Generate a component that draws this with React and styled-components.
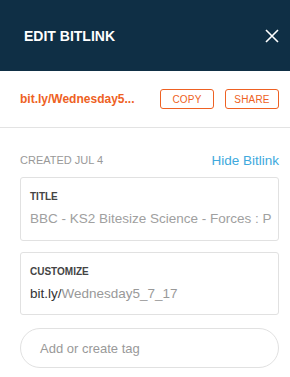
import React from "react";
import styled, { createGlobalStyle } from "styled-components";

const Global = createGlobalStyle`
  html, body { margin: 0; padding: 0; background: #fff; }
  body { font-family: "Liberation Sans", Arial, sans-serif; -webkit-font-smoothing: antialiased; }
  * { box-sizing: border-box; }
`;

const Panel = styled.div`
  width: 290px;
  height: 377px;
  background: #fff;
  display: flex;
  flex-direction: column;
  overflow: hidden;
`;

const Header = styled.header`
  height: 71px;
  background: #0f2f45;
  display: flex;
  align-items: center;
  justify-content: space-between;
  padding: 0 11px 0 24px;
`;

const Title = styled.h1`
  margin: 0;
  color: #fff;
  font-size: 14px;
  font-weight: 700;
`;

const CloseButton = styled.button`
  border: 0;
  background: none;
  padding: 0;
  width: 14px;
  height: 14px;
  display: flex;
  cursor: pointer;
`;

const LinkRow = styled.div`
  height: 57px;
  display: flex;
  align-items: center;
  padding: 0 11px 0 20px;
  border-bottom: 1px solid #e3e3e3;
  gap: 11px;
`;

const ShortLink = styled.span`
  flex: 1;
  color: #ee6123;
  font-size: 12px;
  font-weight: 700;
  white-space: nowrap;
`;

const OutlineButton = styled.button`
  width: 54px;
  height: 20px;
  border: 1px solid #ee6123;
  border-radius: 3px;
  background: #fff;
  color: #ee6123;
  font-family: inherit;
  font-size: 10px;
  padding: 0;
  letter-spacing: 0.2px;
`;

const Body = styled.div`
  padding: 24px 11px 0 20px;
  display: flex;
  flex-direction: column;
`;

const MetaRow = styled.div`
  display: flex;
  justify-content: space-between;
  align-items: center;
  height: 16px;
  margin-bottom: 9px;
`;

const Created = styled.span`
  color: #999;
  font-size: 11px;
  text-transform: uppercase;
`;

const HideLink = styled.a`
  color: #40a9dd;
  font-size: 13.5px;
  text-decoration: none;
`;

const Field = styled.div`
  border: 1px solid #e1e1e1;
  border-radius: 3px;
  height: ${(p) => p.$h || 64}px;
  padding: 13px 9px 0 9px;
  margin-bottom: 11px;
  overflow: hidden;
`;

const Label = styled.div`
  color: #444;
  font-size: 10px;
  font-weight: 700;
  text-transform: uppercase;
  margin-bottom: 9px;
`;

const Value = styled.div`
  color: ${(p) => (p.$dim ? "#a0a0a0" : "#333")};
  font-size: 13.5px;
  white-space: nowrap;
`;

const Dim = styled.span`
  color: #999;
`;

const TagInput = styled.div`
  margin-top: 2px;
  height: 40px;
  border: 1px solid #e1e1e1;
  border-radius: 20px;
  display: flex;
  align-items: center;
  padding-left: 19px;
  color: #999;
  font-size: 13px;
`;

export default function App() {
  return (
    <>
      <Global />
      <Panel>
        <Header>
          <Title>EDIT BITLINK</Title>
          <CloseButton aria-label="Close">
            <svg width="14" height="14" viewBox="0 0 14 14">
              <path d="M1 1L13 13M13 1L1 13" stroke="#fff" strokeWidth="1.6" />
            </svg>
          </CloseButton>
        </Header>
        <LinkRow>
          <ShortLink>bit.ly/Wednesday5...</ShortLink>
          <OutlineButton>COPY</OutlineButton>
          <OutlineButton>SHARE</OutlineButton>
        </LinkRow>
        <Body>
          <MetaRow>
            <Created>Created Jul 4</Created>
            <HideLink>Hide Bitlink</HideLink>
          </MetaRow>
          <Field>
            <Label>Title</Label>
            <Value $dim>BBC - KS2 Bitesize Science - Forces : P</Value>
          </Field>
          <Field $h={63}>
            <Label>Customize</Label>
            <Value>
              bit.ly/<Dim>Wednesday5_7_17</Dim>
            </Value>
          </Field>
          <TagInput>Add or create tag</TagInput>
        </Body>
      </Panel>
    </>
  );
}
